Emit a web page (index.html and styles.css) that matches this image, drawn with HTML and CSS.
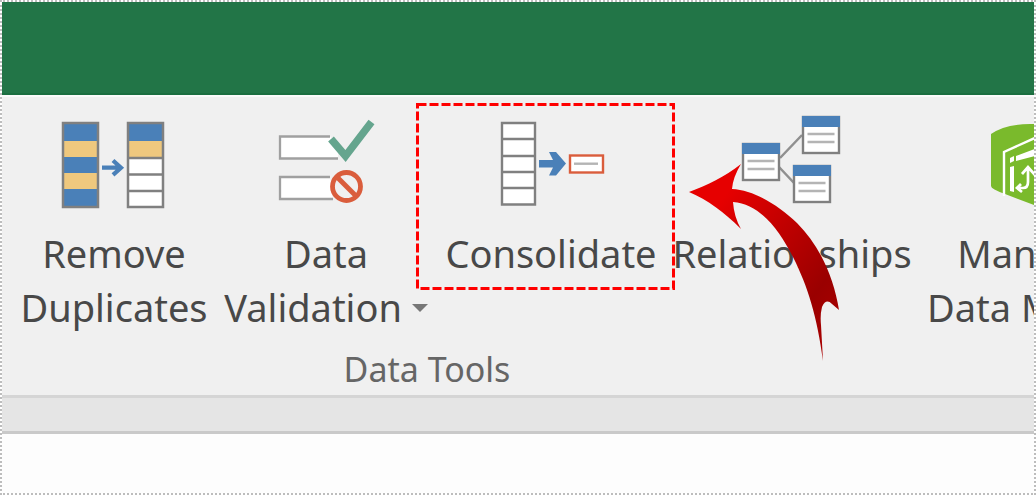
FILE: index.html
```html
<!DOCTYPE html>
<html lang="en">
<head>
    <meta charset="UTF-8">
    <meta name="viewport" content="width=device-width, initial-scale=1.0">
    <title>Data Tools</title>
    <link rel="stylesheet" href="styles.css">
</head>
<body>
    <div class="window">
        <header class="titlebar"></header>

        <section class="ribbon" aria-label="Data Tools">
            <button type="button" class="tool">
                <svg class="icon" viewBox="54 115 120 100" aria-hidden="true">
                    <rect x="62" y="122" width="37" height="86" fill="#4a80b8"/>
                    <path d="M64 141h33v16h-33zM64 173h33v16h-33z" fill="#efc87e"/>
                    <rect x="63" y="123" width="35" height="84" fill="none" stroke="#808080" stroke-width="2.5"/>
                    <rect x="128" y="123" width="35" height="84" fill="#fff"/>
                    <rect x="128" y="123" width="35" height="18" fill="#4a80b8"/>
                    <rect x="128" y="141" width="35" height="16" fill="#efc87e"/>
                    <path d="M128 123h35v84h-35zM128 158h35M128 174.500h35M128 191h35" fill="none" stroke="#808080" stroke-width="2.500"/>
                    <path d="M102 167.700h19M113 160.500l8 7.200-8 7.200" fill="none" stroke="#4a80b8" stroke-width="4.200"/>
                </svg>
                <span>Remove<br>Duplicates</span>
            </button>

            <button type="button" class="tool">
                <svg class="icon" viewBox="266 115 120 100" aria-hidden="true">
                    <path d="M330 136.500h-50v22h58v-14z" fill="#fff"/>
                    <path d="M330 136.500h-50v22h58" fill="none" stroke="#a0a0a0" stroke-width="2.300"/>
                    <path d="M330 177h-50v22h53z" fill="#fff"/>
                    <path d="M330 177h-50v22h53" fill="none" stroke="#a0a0a0" stroke-width="2.300"/>
                    <path d="M331 139l14.500 17L371.500 122" fill="none" stroke="#65a58e" stroke-width="7.500"/>
                    <circle cx="346.500" cy="186.500" r="14" fill="#f0f0f0" stroke="#da5d3c" stroke-width="4.800"/>
                    <path d="M337 177l19 19" stroke="#da5d3c" stroke-width="5"/>
                </svg>
                <span>Data<br>Validation <i class="caret"></i></span>
            </button>

            <button type="button" class="tool">
                <svg class="icon" viewBox="491 115 120 100" aria-hidden="true">
                    <path d="M502 123h33v81.500h-33zM502 139h33M502 156h33M502 172h33M502 188h33" fill="#fff" stroke="#808080" stroke-width="2.400"/>
                    <path d="M539 160h14l-4-8h7l10 11.500-10 12h-7l4-8h-14z" fill="#4a80b8"/>
                    <rect x="570" y="155.500" width="33" height="17" fill="#fff" stroke="#da5d3c" stroke-width="2.400"/>
                    <path d="M574 163.700h24" stroke="#b4b4b4" stroke-width="2.400"/>
                </svg>
                <span>Consolidate</span>
                <svg class="marker" aria-hidden="true">
                    <rect x="1.500" y="1.500" width="256" height="184" fill="none" stroke="#f00" stroke-width="3" stroke-dasharray="9 3"/>
                </svg>
            </button>

            <button type="button" class="tool">
                <svg class="icon" viewBox="732 115 120 100" aria-hidden="true">
                    <path d="M780 158l22-23M779 167l16 17" stroke="#909090" stroke-width="2.500"/>
                    <g id="sheet">
                        <rect x="743" y="144" width="36" height="36" fill="#fff" stroke="#808080" stroke-width="2.400"/>
                        <rect x="742" y="143" width="38" height="11" fill="#4a80b8"/>
                        <path d="M747.500 161h27M747.500 169h27" stroke="#b4b4b4" stroke-width="2.400"/>
                    </g>
                    <use href="#sheet" x="60" y="-27"/>
                    <use href="#sheet" x="51" y="22"/>
                </svg>
                <span>Relationships</span>
                <svg class="pointer" viewBox="682 155 164 210" aria-hidden="true">
                    <defs>
                        <linearGradient id="red" x1="0" y1="0" x2="1" y2="1">
                            <stop offset=".2" stop-color="#e60000"/>
                            <stop offset=".75" stop-color="#9a0000"/>
                            <stop offset="1" stop-color="#b00000"/>
                        </linearGradient>
                    </defs>
                    <path d="M689 192C708 185 724 177 741 164Q733 177 732 189C754 190 778 205 797 223C821 247 834 279 839 310L832 304Q826 298 822 307Q820 315 821 325L823 361C817 316 808 287 793 257C780 232 761 204 733 202Q734 217 741 229C724 212 708 200 689 192z" fill="url(#red)"/>
                </svg>
            </button>

            <button type="button" class="tool">
                <svg class="icon" viewBox="970 115 120 100" aria-hidden="true">
                    <path d="M991 134Q1005 124 1030 124Q1060 124 1077 133V188Q1060 201 1037 206L1005 194Q991 189 991 186z" fill="#7aba2c"/>
                    <path d="M1004 196V152L1037 137L1070 152V196" fill="none" stroke="#fff" stroke-width="2.400"/>
                    <path d="M1010 158l4-2v5l-4 2zM1010 167l4-1v26l-4-1zM1016 156l19-7v7l-19 5z" fill="#fff"/>
                    <path d="M1018 188h5q5 0 5-6v-14M1022 174l6-7 7 8M1021 184l-4 4 5 4" fill="none" stroke="#fff" stroke-width="2.700"/>
                </svg>
                <span>Manage<br>Data Model</span>
            </button>

            <div class="group-name">Data Tools</div>
        </section>

        <div class="gap-bar"></div>
        <main class="sheet"></main>
    </div>
</body>
</html>
```
FILE: styles.css
```css
* {
    box-sizing: border-box;
}

body {
    margin: 0;
    font-family: "Noto Sans", "Open Sans", sans-serif;
    color: #484848;
    background: #fff;
}

.window {
    display: flex;
    flex-direction: column;
    min-height: 100vh;
    border: 2px dotted #bdbdbd;
    overflow: hidden;
}

.titlebar {
    height: 93px;
    background: #227547;
    border-bottom: 2px solid #1b6e40;
}

.ribbon {
    display: grid;
    grid-template-columns: 204px 220px 230px 252px 224px;
    padding: 0 0 0 10px;
    background: #f0f0f0;
    border-top: 2px solid #fafafa;
    border-bottom: 3px solid #d5d5d5;
}

.tool {
    position: relative;
    display: flex;
    flex-direction: column;
    align-items: center;
    gap: 11px;
    padding: 18px 0 0;
    border: 0;
    background: none;
    font: inherit;
    font-size: 38px;
    line-height: 54px;
    color: inherit;
    white-space: nowrap;
}

.icon {
    width: 120px;
    height: 100px;
}

.caret {
    display: inline-block;
    border: 8px solid transparent;
    border-top-color: #777;
    border-bottom: 0;
    vertical-align: 10px;
}

/* dashed frame around the tool to click */
.marker {
    position: absolute;
    top: 6px;
    left: -20px;
    width: 259px;
    height: 187px;
}

.pointer {
    position: absolute;
    top: 58px;
    left: 16px;
    width: 164px;
    height: 210px;
}

.group-name {
    grid-column: 2 / 4;
    padding: 13px 28px 4px 0;
    font-size: 34px;
    line-height: 44px;
    text-align: center;
    color: #666;
}

.gap-bar {
    height: 36px;
    background: #e5e5e5;
    border-bottom: 3px solid #c9c9c9;
}

.sheet {
    flex: 1;
    background: #fdfdfd;
}
```
